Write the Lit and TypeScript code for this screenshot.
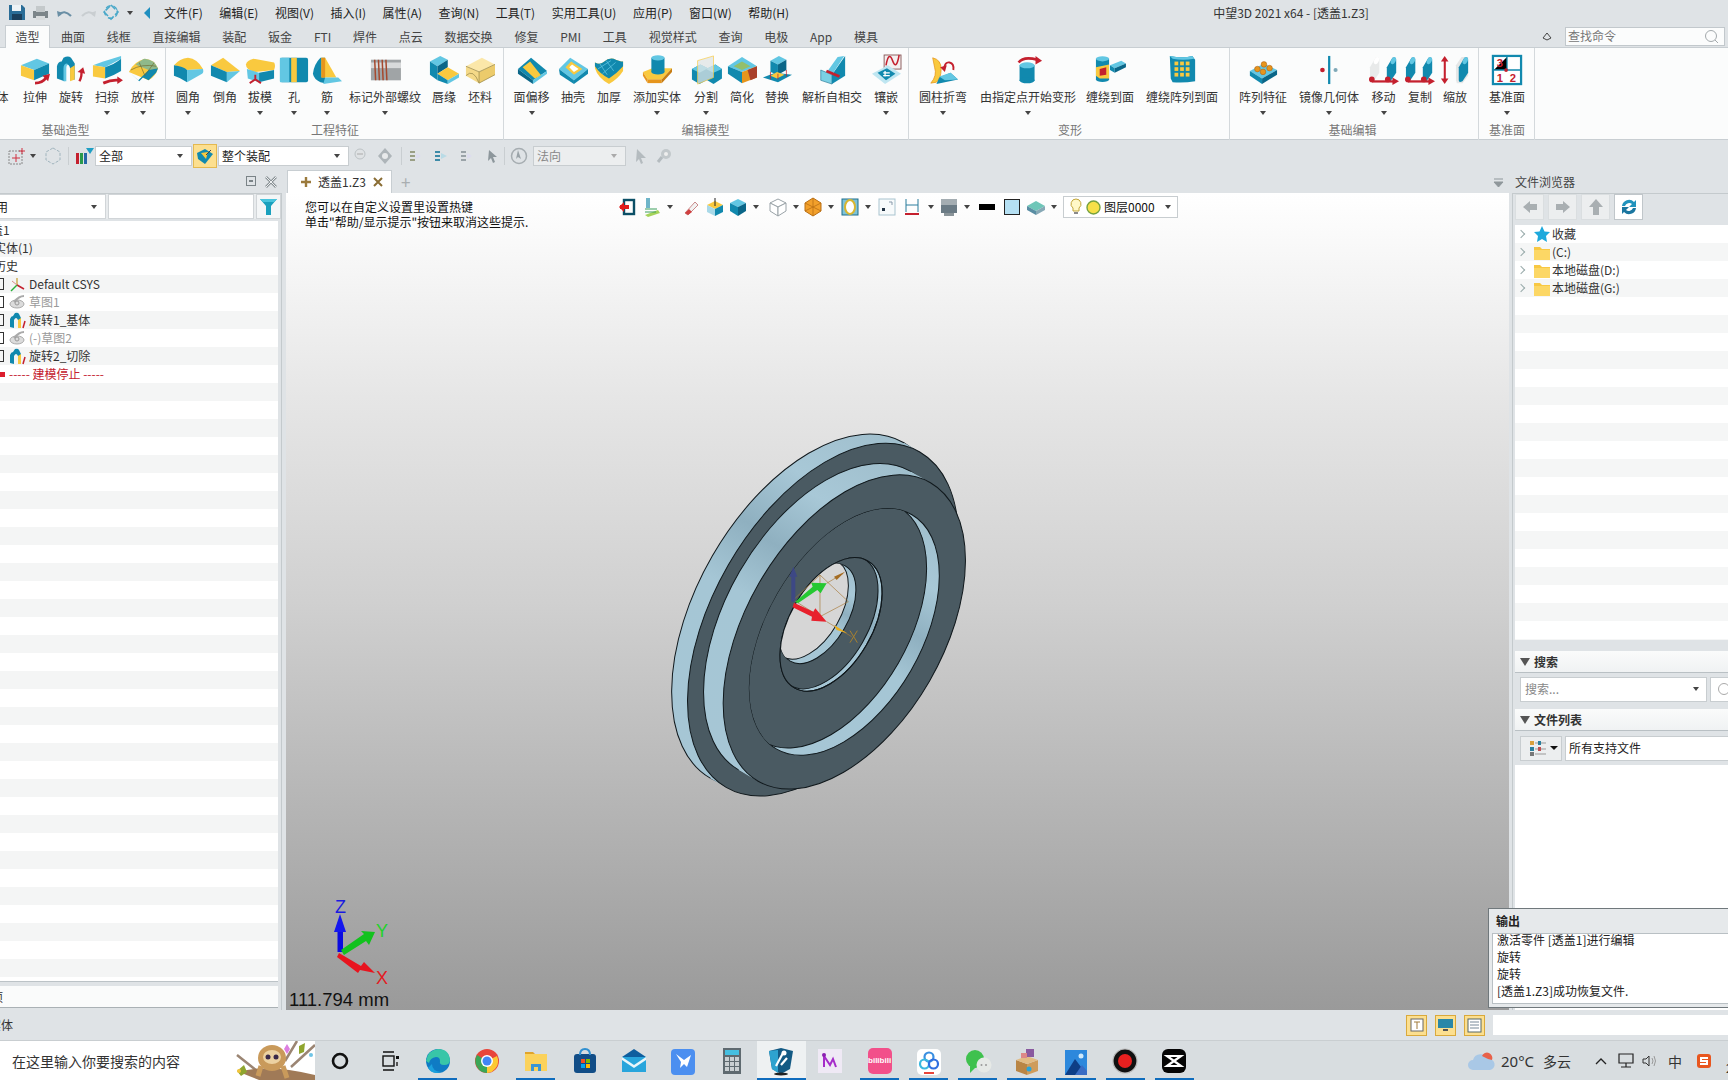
import { LitElement, html, svg, css } from "lit";
import { customElement } from "lit/decorators.js";

const lb = "#62c7e3", tl = "#1189ae", dk = "#0a6688", ye = "#f9c93f", or = "#e6951c", rd = "#c4202e";

const cyl = (x: number, y: number, w: number, h: number, c = tl, top = lb) => svg`<rect x=${x} y=${y} width=${w} height=${h} fill=${c}/><ellipse cx=${x + w / 2} cy=${y + h} rx=${w / 2} ry=${w / 5} fill=${c}/><ellipse cx=${x + w / 2} cy=${y} rx=${w / 2} ry=${w / 5} fill=${top}/>`;
const slant = (x: number, c: string, t: string) => svg`<path d="M${x} 27V13l6-10q4-2 4 2v14l-6 9q-4 2-4-1z" fill=${c}/><ellipse cx=${x + 7} cy="6" rx="2.5" ry="4" transform="rotate(25 ${x + 7} 6)" fill=${t}/>`;

const I: Record<string, unknown> = {
  cut: svg`<polygon points="0,6 19,12 19,30 0,24" fill=${tl}/>`,
  extrude: svg`<polygon points="1,11 18,4 31,9 15,16" fill=${lb}/><polygon points="1,11 15,16 15,27 1,22" fill=${ye}/><polygon points="15,16 31,9 31,20 15,27" fill=${tl}/><path d="M16 30q8 0 12-6" stroke=${rd} stroke-width="3" fill="none"/><polygon points="24,22 32,20 30,28" fill=${rd}/>`,
  revolve: svg`<path d="M1 25V12q1-5 5-5l2-4q5-3 8 0l4 6v17l-5 1V14q-1-4-3-4t-3 4v14z" fill=${tl}/><path d="M8 28V14q0-5 4-5v2q-1 0-1 4v13z" fill=${lb}/><path d="M15 14l5-3v15l-5 2z" fill=${ye}/><path d="M25 28q3-6 2-11" stroke=${rd} stroke-width="2.5" fill="none"/><polygon points="23,18 29,13 31,20" fill=${rd}/>`,
  sweep: svg`<polygon points="1,11 12,7 31,1 31,4 14,13" fill=${lb}/><polygon points="1,11 14,13 14,25 1,23" fill=${ye}/><path d="M14 13q10-3 17-9v13q-8 5-17 8z" fill=${tl}/><path d="M12 30q9-4 17-3" stroke=${rd} stroke-width="3" fill="none"/><polygon points="27,23 33,27 27,31" fill=${rd}/>`,
  loft: svg`<path d="M1 18Q6 7 18 4q10 1 14 10-2 8-10 13z" fill=${ye}/><path d="M8 10q8-6 10-6 10 1 14 10l-10 2z" fill="#8fb98a"/><path d="M1 18l10 9 11-11 10-2-2 5-8 8-6-3-4 4z" fill=${tl}/><path d="M12 8l6 14 10-14M3 16q12-7 27-4" stroke="#6f6a2e" stroke-width=".7" fill="none"/>`,
  fillet: svg`<path d="M1 11q6-7 15-8 10 1 16 12l-17 1q-8-4-14-5z" fill=${ye}/><path d="M1 11q10 1 14 5l0 13Q8 24 1 22z" fill=${tl}/><path d="M15 16l17-1q1 4-1 5L15 29z" fill=${lb}/>`,
  chamfer: svg`<polygon points="1,11 14,3 32,17 18,18" fill=${ye}/><polygon points="1,11 18,18 18,29 1,22" fill=${tl}/><polygon points="18,18 32,17 18,29" fill=${lb}/>`,
  draft: svg`<path d="M1 10q1-4 8-6l22 4q2 3 0 8l-20 2q-10-2-10-8z" fill=${ye}/><path d="M2 15l13 4v10l-12-4z" fill=${lb}/><path d="M15 19l16-3v9l-16 4z" fill=${tl}/><path d="M11 21v5l-6 4M11 26l6 4" stroke=${rd} stroke-width="2" fill="none"/>`,
  hole: svg`<rect x="1" y="3" width="30" height="26" rx="2" fill=${tl}/><rect x="1" y="3" width="10" height="26" fill=${lb}/><rect x="13" y="3" width="6" height="26" fill=${ye}/>`,
  rib: svg`<path d="M1 20Q2 10 9 3l5 0v27l-5-1q-7-3-8-9z" fill=${tl}/><polygon points="10,3 14,3 26,24 10,24" fill=${ye}/><polygon points="10,3 14,3 14,24 10,24" fill=${or}/><polygon points="14,24 28,24 32,28 12,31" fill=${lb}/>`,
  thread: svg`<rect x="1" y="5" width="32" height="22" fill="#a0a4a6"/><rect x="1" y="8" width="32" height="6" fill="#d8dadb"/>
    <path d="M5 5l1 22M9 5l1 22M13 5l1 22M17 5l1 22" stroke="#a5492e" stroke-width="1.6"/>`,
  lip: svg`<polygon points="1,7 12,1 20,5 9,12" fill=${lb}/><polygon points="1,7 9,12 9,27 1,21" fill=${tl}/><polygon points="9,12 20,5 20,13 9,20" fill=${dk}/><polygon points="9,20 20,13 32,20 20,27" fill=${ye}/><polygon points="9,20 20,27 20,31 9,27" fill=${tl}/><polygon points="20,27 32,20 32,24 20,31" fill=${lb}/>`,
  stock: svg`<polygon points="1,12 18,3 32,10 15,18" fill="#fbe7a9"/><polygon points="1,12 15,18 15,30 1,22" fill="#f4d988"/><polygon points="15,18 32,10 32,21 15,30" fill="#eccb6b"/><path d="M1 12l14 6 17-8M15 18v12M1 22q8-8 14 8M15 30l17-9" stroke="#9a8a4c" stroke-width=".8" fill="none"/>`,
  offset: svg`<polygon points="1,15 15,3 32,17 17,27" fill=${tl}/><polygon points="6,13 14,7 26,22 19,25" fill=${ye}/><polygon points="1,15 17,27 17,31 1,20" fill=${dk}/><polygon points="17,27 32,17 32,20 17,31" fill=${lb}/>`,
  shell: svg`<polygon points="1,15 13,3 32,15 17,27" fill=${lb}/><polygon points="8,13 14,7 26,15 17,21" fill=${ye}/><polygon points="12,13 15,10 22,15 17,18" fill="#fff"/><polygon points="1,15 17,27 17,31 2,21" fill=${tl}/><polygon points="17,27 32,15 32,20 17,31" fill=${tl}/>`,
  thicken: svg`<path d="M1 8q6 3 10-1t10-3q6 3 10 3v10q-5 8-15 14Q4 24 1 14z" fill=${ye}/><path d="M1 8q6 3 10-1t10-3q6 3 10 3v5q-6 7-15 13Q6 20 1 12z" fill=${tl}/><path d="M6 9l8 12M13 6l8 11M4 15l14-9M9 20l14-12" stroke=${lb} stroke-width=".8"/>`,
  addsolid: svg`<polygon points="1,18 11,14 32,14 21,26 6,26" fill=${ye}/><polygon points="1,18 6,26 6,30 1,22" fill=${or}/><polygon points="6,26 21,26 21,30 6,30" fill=${or}/><polygon points="21,26 32,14 32,18 21,30" fill="#c77d14"/>${cyl(10, 3, 14, 15)}`,
  split: svg`<polygon points="1,15 10,10 18,14 18,26 9,31 1,26" fill=${tl}/><polygon points="16,15 26,10 33,15 33,25 24,31 16,26" fill=${tl}/><polygon points="16,15 26,10 33,15 24,19" fill=${lb}/><polygon points="1,15 10,10 18,14 9,19" fill=${lb}/><polygon points="7,6 24,1 24,24 7,31" fill="#dfe4e4" fill-opacity=".75" stroke=${ye} stroke-width=".7"/>`,
  simplify: svg`<polygon points="1,12 16,2 32,12 16,18" fill=${lb}/><polygon points="1,12 16,18 16,30 1,20" fill=${tl}/><polygon points="16,18 32,12 32,24 16,30" fill=${or}/><polygon points="7,12 16,7 25,12 16,16" fill="#93bf6a"/><polygon points="22,16 32,12 32,24 25,27" fill="#a9402a"/>`,
  replace: svg`<polygon points="9,6 18,1 26,5 17,10" fill=${lb}/><polygon points="9,6 17,10 17,21 9,18" fill=${tl}/><polygon points="17,10 26,5 26,16 17,21" fill=${dk}/><polygon points="1,24 14,19 32,21 17,29" fill=${tl}/><polygon points="9,22 16,18 24,21 16,25" fill=${ye}/><path d="M9 18v8M17 20v6M26 16v7" stroke=${rd} stroke-width=".8"/>`,
  selfint: svg`<polygon points="4,16 16,21 16,31 4,27" fill="#7bd0e4" stroke=${dk} stroke-width=".6"/><polygon points="16,21 30,1 30,22 16,31" fill=${tl}/><polygon points="10,19 22,2 29,1 16,21" fill=${lb}/><path d="M10 17l14 6" stroke=${rd} stroke-width="3"/>`,
  inlay: svg`<rect x="14" y="0" width="18" height="15" fill="#f3f0f0" stroke="#8a5a5a"/><path d="M16 11q3-16 7-5t7-6" stroke=${rd} fill="none" stroke-width="1.6"/><polygon points="1,20 18,11 32,20 15,31" fill="#bfe6f1"/><polygon points="7,19 17,14 26,20 16,27" fill=${tl}/><path d="M13 19h7M13 22h7M15 17v6" stroke="#fff" stroke-width="1.4"/>`,
  bend: svg`<path d="M5 3q9 2 9 12t-5 14l-6 1q7-8 4-17z" fill=${ye} stroke=${or} stroke-width=".8"/><polygon points="12,24 24,19 32,26 9,31" fill=${tl}/><polygon points="12,23 24,19 32,26 18,27" fill=${lb}/><path d="M17 15q1-8 6-7t4 8" stroke=${rd} stroke-width="2" fill="none"/><polygon points="13,13 20,11 18,18" fill=${rd}/>`,
  deform: svg`${cyl(7, 11, 16, 16)}<path d="M6 8q5-7 20-3" stroke=${rd} stroke-width="2.8" fill="none"/><polygon points="24,1 31,6 24,10" fill=${rd}/>`,
  wrap: svg`${cyl(1, 4, 14, 22)}<polygon points="1,13 15,10 15,25 5,25 1,22" fill=${ye}/><polygon points="5,15 12,13 12,21 5,22" fill=${rd}/><polygon points="16,11 28,6 33,9 21,14" fill=${lb}/><polygon points="16,11 21,14 21,19 16,16" fill=${tl}/><polygon points="21,14 33,9 33,13 21,19" fill=${dk}/>`,
  wrappat: svg`<path d="M3 1q14 3 24 0l3 4v23q-12 2-24 1l-2-4z" fill=${tl}/><path d="M3 1q14 3 24 0l2 3q-12 2-23 0z" fill=${lb}/><g fill=${ye}><rect x="8" y="7" width="4" height="4"/><rect x="14" y="7" width="4" height="4"/><rect x="20" y="7" width="4" height="4"/><rect x="8" y="13" width="4" height="4"/><rect x="14" y="13" width="4" height="4"/><rect x="20" y="13" width="4" height="4"/><rect x="8" y="19" width="4" height="4"/><rect x="14" y="19" width="4" height="4"/><rect x="20" y="19" width="4" height="4"/></g>`,
  pattern: svg`<polygon points="2,17 17,9 31,16 15,25" fill=${lb}/><polygon points="2,17 15,25 15,31 2,22" fill=${tl}/><polygon points="15,25 31,16 31,21 15,31" fill=${dk}/><g fill=${or} stroke="#a8560f" stroke-width=".5"><circle cx="10" cy="15" r="3"/><circle cx="17" cy="10" r="3"/><circle cx="23" cy="14" r="3"/><circle cx="16" cy="18" r="3"/></g>`,
  mirror: svg`<rect x="15" y="1" width="2.4" height="30" fill=${tl}/><circle cx="9" cy="16" r="2.5" fill=${rd}/><circle cx="23" cy="16" r="2.2" fill="#7fa9b8"/>`,
  move: svg`${slant(1, "#e8eaea", "#fff")}${slant(19, tl, lb)}<circle cx="3" cy="26" r="3" fill=${rd}/><circle cx="20" cy="26" r="3" fill=${rd}/><rect x="3" y="27" width="23" height="2.4" fill=${rd}/><polygon points="25,24 32,28 25,32" fill=${rd}/>`,
  copy: svg`${slant(1, tl, lb)}${slant(19, tl, lb)}<circle cx="3" cy="26" r="3" fill=${rd}/><circle cx="20" cy="26" r="3" fill=${rd}/><rect x="3" y="27" width="23" height="2.4" fill=${rd}/><polygon points="25,24 32,28 25,32" fill=${rd}/>`,
  scale: svg`<rect x="4" y="5" width="2.2" height="22" fill=${rd}/><polygon points="1,7 5,1 9,7" fill=${rd}/><polygon points="1,25 5,31 9,25" fill=${rd}/><path d="M17 27V11l6-9h7v20l-6 8h-6z" fill="#e5e7e7"/>${slant(20, tl, lb)}`,
  datum: svg`<rect x="1" y="1" width="30" height="30" fill="#fff" stroke=${tl} stroke-width="2.4"/><path d="M16 2v14H2M16 16h14" stroke=${tl} stroke-width="1.4"/><circle cx="15" cy="16" r="2" fill=${rd}/><g fill=${rd} font-family="Liberation Sans" font-weight="700" font-size="12"><text x="5" y="13">3</text><text x="5" y="29">1</text><text x="19" y="29">2</text></g>`,
  save: svg`<path d="M1 1h13l3 3v12H1z" fill="#2a6d97"/><rect x="4" y="1" width="9" height="6" fill="#eef3f6"/><rect x="4" y="10" width="10" height="6" fill="#1a3f5c"/>`,
  print: svg`<rect x="1" y="7" width="15" height="7" fill="#7c8589"/><rect x="4" y="2" width="9" height="6" fill="#c4c9cb"/><rect x="4" y="12" width="9" height="4" fill="#d9dcdd"/>`,
  undo: svg`<path d="M3 9q5-6 12 1" stroke="#6a8fa5" stroke-width="2.2" fill="none"/><polygon points="1,5 7,7 2,11" fill="#6a8fa5"/>`,
  redo: svg`<path d="M14 9q-5-6-12 1" stroke="#c9ced1" stroke-width="2.2" fill="none"/><polygon points="16,5 10,7 15,11" fill="#c9ced1"/>`,
  orbit: svg`<path d="M9 1l7 7-7 7-7-7z" fill="none" stroke="#49a8c9" stroke-width="1.6" stroke-dasharray="6 2"/><circle cx="9" cy="8" r="6.4" fill="none" stroke="#49a8c9" stroke-width="1.2" stroke-dasharray="5 3"/>`,
};

const fileIcon = svg`<path d="M0 3h6l2 2h8v11H0z" fill="#f8c843"/><rect y="6" width="16" height="10" fill="#fcd765"/>`;

const tri = svg`
  <g fill="none" stroke="#a77a3a" stroke-width="2"><path d="M510 465l85 80-85 45-80-50zM510 465v125"/><path d="M530 490l50-30M530 605l75 45"/></g>
  <polygon points="418,470 430,440 442,470 436,470 436,545 424,545 424,470" fill="#39448f" fill-opacity=".8"/>
  <polygon points="436,545 488,500 484,488 530,490 512,520 502,510 444,550" fill="#25c832"/>
  <polygon points="432,548 490,575 496,565 530,605 484,602 486,590 428,562" fill="#e8202c"/>
  <polygon points="552,470 585,455 560,480" fill="#a46c22"/><polygon points="552,615 592,640 560,630" fill="#eeb11d"/>
  <path d="M600 632l22 36M622 632l-22 36" stroke="#a8812e" stroke-width="3"/>`;

const part = svg`
  <defs>
    <linearGradient id="lg" x1="0" x2="1" y1="0" y2="0"><stop offset="0" stop-color="#a6c6d5"/><stop offset=".45" stop-color="#a5c6d5"/><stop offset=".62" stop-color="#8fb0c0"/><stop offset=".8" stop-color="#a8c8d7"/><stop offset="1" stop-color="#a0bfcd"/></linearGradient>
    <clipPath id="ce"><ellipse rx="406" ry="231"/></clipPath>
    <clipPath id="ch"><ellipse cy="-46" rx="220" ry="123"/></clipPath>
    <clipPath id="ck"><ellipse cx="8" cy="-97" rx="165" ry="92"/></clipPath>
  </defs>
  <g transform="translate(650 420) scale(.3333)">
    <g transform="translate(583 636) rotate(-60)" stroke="#10181c" stroke-width="3">
      <ellipse cy="-129" rx="581" ry="328" fill="url(#lg)"/>
      <rect x="-581" y="-129" width="1162" height="55" fill="url(#lg)" stroke="none"/>
      <ellipse cy="-120" rx="581" ry="328" fill="none" stroke-width="1.5" stroke-dasharray="500 3000" stroke-dashoffset="-100"/>
      <ellipse cy="-74" rx="581" ry="328" fill="#4a5a62"/>
      <ellipse cy="-68" rx="517" ry="295" fill="url(#lg)"/>
      <rect x="-517" y="-68" width="1034" height="68" fill="url(#lg)" stroke="none"/>
      <ellipse rx="517" ry="295" fill="#4a5a62"/>
      <ellipse rx="406" ry="231" fill="url(#lg)"/>
      <g clip-path="url(#ce)"><ellipse cy="-44" rx="406" ry="231" fill="#4a5a62"/></g>
      <ellipse cy="-46" rx="220" ry="123" fill="url(#lg)"/>
      <g clip-path="url(#ch)">
        <ellipse cy="-60" rx="220" ry="123" fill="#4a5a62"/>
        <ellipse cx="8" cy="-97" rx="165" ry="92" fill="url(#lg)"/>
        <g clip-path="url(#ck)"><ellipse cx="8" cy="-123" rx="165" ry="92" fill="#d6d6d6"/></g>
      </g>
      <ellipse cy="-46" rx="220" ry="123" fill="none"/>
    </g>
    ${tri}
  </g>
  <g>
    <rect x="337.500" y="930" width="5.500" height="22" fill="#0a0ae0"/><polygon points="334,932 340,914 346,932" fill="#1416ee"/>
    <polygon points="341,950 364,934 361,931 375,932 369,945 366,941 344,955" fill="#12c21e"/>
    <polygon points="339,953 361,966 364,962 375,973 360,970 358,973 337,957" fill="#e8141e"/>
    <text x="335" y="913" fill="#1a1ae0" font-family="Liberation Sans" font-size="18">Z</text>
    <text x="376" y="937" fill="#22d22a" font-family="Liberation Sans" font-size="18">Y</text>
    <text x="376" y="984" fill="#e31b23" font-family="Liberation Sans" font-size="18">X</text>
  </g>`;

type It = [string, number, string, boolean?];
const groups: { label: string; pl?: number; pr?: number; items: It[] }[] = [
  { label: "基础造型", pl: 41, pr: 4, items: [["六面体", 41, "cut"], ["", 6, ""], ["拉伸", 36, "extrude"], ["旋转", 36, "revolve"], ["扫掠", 36, "sweep", true], ["放样", 36, "loft", true]] },
  { label: "工程特征", items: [["圆角", 36, "fillet", true], ["倒角", 38, "chamfer"], ["拔模", 32, "draft", true], ["孔", 36, "hole", true], ["筋", 30, "rib", true], ["标记外部螺纹", 86, "thread", true], ["唇缘", 32, "lip"], ["坯料", 40, "stock"]] },
  { label: "编辑模型", pr: 5, items: [["面偏移", 47, "offset", true], ["抽壳", 36, "shell"], ["加厚", 36, "thicken"], ["添加实体", 60, "addsolid", true], ["分割", 38, "split", true], ["简化", 34, "simplify"], ["替换", 36, "replace"], ["解析自相交", 74, "selfint"], ["镶嵌", 34, "inlay", true]] },
  { label: "变形", pr: 2, items: [["圆柱折弯", 60, "bend", true], ["由指定点开始变形", 110, "deform", true], ["缠绕到面", 54, "wrap"], ["缠绕阵列到面", 90, "wrappat"]] },
  { label: "基础编辑", pr: 7, items: [["阵列特征", 58, "pattern", true], ["镜像几何体", 74, "mirror", true], ["移动", 35, "move", true], ["复制", 38, "copy"], ["缩放", 32, "scale"]] },
  { label: "基准面", items: [["基准面", 48, "datum", true]] },
];

const menus = ["文件(F)", "编辑(E)", "视图(V)", "插入(I)", "属性(A)", "查询(N)", "工具(T)", "实用工具(U)", "应用(P)", "窗口(W)", "帮助(H)"];
const tabs = ["造型", "曲面", "线框", "直接编辑", "装配", "钣金", "FTI", "焊件", "点云", "数据交换", "修复", "PMI", "工具", "视觉样式", "查询", "电极", "App", "模具"];

const caret = html`<span class="caret"></span>`;
const csysIc = svg`<path d="M8 9V2" stroke="#c9a23a" stroke-width="1.3"/><path d="M8 9l7 4" stroke="#c4202e" stroke-width="1.5"/><path d="M8 9l-6 6" stroke="#2ab03a" stroke-width="1.5"/><path d="M8 9L3 5" stroke="#d98a8a"/>`;
const sketchIc = svg`<ellipse cx="8" cy="10" rx="7" ry="4" fill="#dcdcdc" stroke="#aaa"/><path d="M5 8q5-6 10-6" stroke="#aaa" stroke-width="2" fill="none"/><circle cx="8" cy="9" r="2" fill="none" stroke="#999"/>`;
const revIc = svg`<path d="M1 15V7q1-3 3-3l2-3q3-1 4 1l2 4v10l-3 0V8q-1-2-2-2T5 8v8z" fill="#1189ae"/><path d="M9 8l3-2v10l-3 0z" fill="#f9c93f"/><path d="M14 16l2-7" stroke="#c4202e" stroke-width="1.5"/>`;

const treeRows: [unknown, string, string?][] = [
  [csysIc, "Default CSYS"],
  [sketchIc, "草图1", "g"],
  [revIc, "旋转1_基体"],
  [sketchIc, "(-)草图2", "g"],
  [revIc, "旋转2_切除"],
];

const viewIcons: [unknown, number, boolean?][] = [
  [svg`<rect x="5" y="3" width="10" height="14" fill="none" stroke="#0b4f66" stroke-width="2.4"/><rect x="1" y="8" width="9" height="4" fill="#e01b1b"/><polygon points="0,10 5,5 5,15" fill="#e01b1b"/>`, 23],
  [svg`<rect x="4" y="1" width="4" height="10" fill="#6fb5c9"/><path d="M3 18l13-5 2 3-12 4z" fill="#a5d35a"/><path d="M3 12h12M3 15h11" stroke="#3c9f5c"/>`, 40, true],
  [svg`<path d="M3 16l10-11 3 3L6 18z" fill="#f2f2f2" stroke="#c98a8a"/><path d="M3 16l4-4 3 3-4 3z" fill="#d04040"/>`, 23],
  [svg`<polygon points="2,8 10,4 18,8 10,12" fill="#f9c93f"/><polygon points="2,8 10,12 10,19 2,15" fill="#a9d9e8"/><polygon points="10,12 18,8 18,15 10,19" fill="#1189ae"/><path d="M10 1v8" stroke="#222"/>`, 23],
  [svg`<polygon points="2,6 10,2 18,6 10,10" fill="#62c7e3"/><polygon points="2,6 10,10 10,19 2,14" fill="#1189ae"/><polygon points="10,10 18,6 18,14 10,19" fill="#0a6688"/>`, 40, true],
  [svg`<g fill="#fff" stroke="#9aa3a8"><polygon points="2,6 10,2 18,6 10,10"/><polygon points="2,6 10,10 10,19 2,14"/><polygon points="10,10 18,6 18,14 10,19"/></g>`, 35, true],
  [svg`<polygon points="10,1 18,6 18,14 10,19 2,14 2,6" fill="#f2a02b" stroke="#b96e14"/><path d="M10 1v18M2 6l16 8M18 6L2 14" stroke="#b96e14" stroke-width=".8"/>`, 37, true],
  [svg`<rect x="2" y="2" width="16" height="16" fill="#7fc3d8" stroke="#1f6f8b"/><ellipse cx="10" cy="10" rx="5" ry="7" fill="#fff" stroke="#d9b62f" stroke-width="2"/>`, 37, true],
  [svg`<rect x="2" y="2" width="16" height="16" fill="#f7fafb" stroke="#a9c4cf"/><rect x="5" y="11" width="3" height="3" fill="#234"/><path d="M12 5h3v3" stroke="#89a" fill="none"/>`, 26],
  [svg`<path d="M3 2v13M15 2v13" stroke="#6fa6bc" stroke-width="1.5"/><path d="M3 8h12" stroke="#2c7f9e"/><path d="M2 17h14" stroke="#c4202e" stroke-width="2"/>`, 36, true],
  [svg`<rect x="2" y="2" width="16" height="14" fill="#6b7b85"/><rect x="2" y="2" width="16" height="6" fill="#a4adb2"/><rect x="5" y="16" width="10" height="3" fill="#8a9499"/>`, 40, true],
];

const taskIcons: [string, unknown][] = [
  ["", svg`<circle cx="14" cy="14" r="7" fill="none" stroke="#111" stroke-width="2.6"/>`],
  ["", svg`<rect x="8" y="9" width="11" height="10" fill="none" stroke="#111" stroke-width="1.4"/><path d="M8 5h11M8 23h11" stroke="#111" stroke-width="1.6"/><rect x="21" y="9" width="3" height="3" fill="#111"/><rect x="21" y="15" width="2" height="4" fill="#555"/>`],
  ["u", svg`<circle cx="14" cy="14" r="12" fill="#0f7bc4"/><path d="M2 14Q4 3 14 2q11 0 12 11 0 5-6 5-5 0-4-4 0-4-4-4-6 1-7 6z" fill="#38c6a8"/><path d="M8 17q0 7 9 8-9 3-13-4z" fill="#1ba0dd"/>`],
  ["", svg`<circle cx="14" cy="14" r="12" fill="#e8453a"/><path d="M14 14L4 20A12 12 0 0 0 14 26z" fill="#3aa757"/><path d="M14 14l10-5a12 12 0 0 1-10 17z" fill="#fcc934"/><path d="M14 14L4 20A12 12 0 0 1 4 8z" fill="#3aa757"/><circle cx="14" cy="14" r="6" fill="#fff"/><circle cx="14" cy="14" r="4.500" fill="#4285f4"/>`],
  ["u", svg`<path d="M3 5h8l2 2H3z" fill="#e0a42b"/><rect x="3" y="7" width="22" height="17" fill="#fbd25c"/><path d="M9 24v-7h10v7h-3v-4h-4v4z" fill="#3a96d6"/>`],
  ["", svg`<rect x="3" y="7" width="22" height="19" rx="3" fill="#114d87"/><path d="M9 8q0-6 5-6t5 6" stroke="#2f8fd0" stroke-width="2" fill="none"/><rect x="10" y="12" width="4" height="4" fill="#f25022"/><rect x="15" y="12" width="4" height="4" fill="#7fba00"/><rect x="10" y="17" width="4" height="4" fill="#00a4ef"/><rect x="15" y="17" width="4" height="4" fill="#ffb900"/>`],
  ["", svg`<polygon points="2,10 14,2 26,10 14,18" fill="#0e5e9e"/><rect x="2" y="10" width="24" height="15" fill="#28a5dc"/><polygon points="2,10 14,18 26,10 26,13 14,21 2,13" fill="#e9f6fb"/>`],
  ["", svg`<rect x="2" y="2" width="24" height="26" rx="4" fill="#4c8ff0"/><path d="M7 7l8 6 7-5-4 12-3-3-4 4 1-6z" fill="#fff"/>`],
  ["", svg`<rect x="5" y="1" width="18" height="26" fill="#5f6a70"/><rect x="7" y="3" width="14" height="5" fill="#45bfe0"/><g fill="#c9cfd2"><rect x="7" y="10" width="4" height="4"/><rect x="12" y="10" width="4" height="4"/><rect x="17" y="10" width="4" height="4"/><rect x="7" y="15" width="4" height="4"/><rect x="12" y="15" width="4" height="4"/><rect x="17" y="15" width="4" height="4"/><rect x="7" y="20" width="4" height="4"/><rect x="12" y="20" width="4" height="4"/><rect x="17" y="20" width="4" height="4"/></g>`],
  ["a", svg`<polygon points="2,4 14,1 26,4 23,22 14,27 5,22" fill="#135a84"/><polygon points="2,4 11,3 11,26 5,22" fill="#2ea3cf"/><path d="M9 19l7-13M14 18l6-7" stroke="#fff" stroke-width="2.2"/><circle cx="17" cy="6" r="2.500" fill="#fff"/><ellipse cx="14" cy="27" rx="7" ry="1.500" fill="#222"/>`],
  ["", svg`<rect x="2" y="2" width="24" height="24" fill="#efe9f5"/><path d="M8 20V9M8 9l6 9 3-6 3 8" stroke="#a52bc9" stroke-width="2" fill="none"/><circle cx="8" cy="8" r="2" fill="#8a1eb0"/>`],
  ["u", ""],
  ["u", svg`<rect x="2" y="2" width="24" height="26" rx="5" fill="#fff"/><circle cx="14" cy="10" r="4.500" fill="none" stroke="#3a8fe0" stroke-width="2.2"/><circle cx="9.500" cy="17" r="4.500" fill="none" stroke="#3ab8e0" stroke-width="2.2"/><circle cx="18.500" cy="17" r="4.500" fill="none" stroke="#2f6fe0" stroke-width="2.2"/><rect x="9" y="25" width="10" height="2" fill="#e8453a"/>`],
  ["u", svg`<ellipse cx="11" cy="12" rx="9" ry="9" fill="#3fc14e"/><polygon points="6,19 6,26 12,20" fill="#3fc14e"/><circle cx="20" cy="18" r="7.500" fill="#e6e9e6"/><circle cx="17.500" cy="18" r="1" fill="#999"/><circle cx="22" cy="18" r="1" fill="#999"/>`],
  ["u", svg`<polygon points="3,13 14,17 14,28 3,24" fill="#b98545"/><polygon points="14,17 25,13 25,24 14,28" fill="#cf9c5c"/><polygon points="3,13 14,9 25,13 14,17" fill="#e2bb84"/><rect x="13" y="2" width="8" height="8" fill="#8a5aa0"/><rect x="8" y="6" width="6" height="5" fill="#d88"/><circle cx="16" cy="22" r="2.500" fill="#28a5dc"/>`],
  ["u", svg`<rect x="3" y="3" width="22" height="25" fill="#2d88dc"/><circle cx="19" cy="9" r="2.500" fill="#cfe9fb"/><polygon points="3,28 13,12 25,28" fill="#0e3e86"/><polygon points="13,28 20,18 25,24 25,28" fill="#3a6cc4"/>`],
  ["u", svg`<circle cx="14" cy="14" r="12" fill="#111" stroke="#bbb" stroke-width="1.2"/><circle cx="14" cy="14" r="7" fill="#e8201f"/>`],
  ["u", svg`<rect x="2" y="2" width="24" height="24" rx="6" fill="#050505"/><path d="M7 9l14 10H7l14-10zM7 9h14M7 19h14" stroke="#fff" stroke-width="2.2" fill="none"/>`],
];

@customElement("app-root")
export class AppRoot extends LitElement {
  static styles = css`
    :host { display: block; width: 1728px; height: 1080px; overflow: hidden; position: relative; background: #dfe3e6; font-family: "Noto Sans CJK SC", "Noto Sans", sans-serif; font-size: 12px; color: #333; line-height: 1; }
    svg { display: block; flex: none; overflow: visible; }
    .menubar { height: 25px; display: flex; align-items: center; white-space: nowrap; padding-left: 8px; position: relative; }
    .qa { display: flex; align-items: center; gap: 7px; width: 156px; flex: none; }
    .qa .back { width: 0; height: 0; border-top: 6px solid transparent; border-bottom: 6px solid transparent; border-right: 6px solid #1f8fc0; margin-left: 4px; }
    .qa .orb { margin-left: -2px; }
    .menus { display: flex; gap: 16.500px; color: #222; }
    .title { margin-left: 424px; color: #333; }
    .tabs { height: 22px; display: flex; padding-left: 5px; position: relative; z-index: 1; }
    .tab { padding: 0 10.900px; display: flex; align-items: center; color: #444; margin-bottom: -1px; }
    .tab.on { background: #fbfcfc; border: 1px solid #c8ced2; border-bottom: none; padding: 0 9.500px; }
    .cmd { margin-left: auto; margin-right: 3px; display: flex; align-items: center; gap: 13px; }
    .cmdbox { width: 160px; height: 19px; background: #fbfcfc; border: 1px solid #c2c8cc; display: flex; align-items: center; justify-content: space-between; padding: 0 5px 0 2px; color: #777; box-sizing: border-box; }
    .ribbon { height: 93px; background: #fbfcfc; border-top: 1px solid #c8ced2; border-bottom: 1px solid #c8ced2; box-sizing: border-box; display: flex; margin-left: -71px; width: 1799px; }
    .grp { display: flex; flex-direction: column; border-right: 1px solid #d4d9dc; padding: 0 3px 0 4px; box-sizing: border-box; flex: none; height: 92px; }
    .grp .items { display: flex; height: 73px; }
    .grp .lab { flex: 1; display: flex; align-items: center; justify-content: center; color: #777; padding-bottom: 2px; }
    .item { display: flex; flex-direction: column; align-items: center; padding-top: 7px; box-sizing: border-box; flex: none; white-space: nowrap; color: #333; }
    .item .t { margin-top: 6px; height: 14px; }
    .caret { width: 0; height: 0; border-left: 3px solid transparent; border-right: 3px solid transparent; border-top: 4px solid #444; flex: none; display: inline-block; }
    .item .caret { margin-top: 6px; }
    .tools { height: 30px; display: flex; align-items: center; padding: 2px 0 0 8px; box-sizing: border-box; }
    .combo { height: 20px; background: #fff; border: 1px solid #c8cdd0; box-sizing: border-box; display: flex; align-items: center; justify-content: space-between; padding: 0 8px 0 3px; color: #222; flex: none; }
    .combo.dis { background: #eceeef; color: #888; }
    .combo.dis .caret { border-top-color: #aaa; }
    .yellowbtn { width: 24px; height: 24px; background: #fcdf8f; border: 1px solid #e4b94f; box-sizing: border-box; display: flex; align-items: center; justify-content: center; margin: 0 1px; flex: none; }
    .vs { width: 1px; height: 18px; background: #c9ced1; flex: none; }
    .docbar { height: 23px; display: flex; align-items: stretch; }
    .docl { width: 287px; flex: none; display: flex; justify-content: flex-end; align-items: center; gap: 8px; padding-right: 10px; box-sizing: border-box; }
    .doctab { width: 105px; background: #fff; border: 1px solid #c8ced2; border-bottom: none; box-sizing: border-box; display: flex; align-items: center; padding-left: 13px; gap: 4px; color: #333; }
    .doctab span { white-space: nowrap; margin-left: 3px; }
    .doctab .x { margin-left: 3px; }
    .plus { color: #a9aeb1; font-size: 17px; margin-left: 9px; align-self: center; }
    .fbt { margin-left: auto; width: 216px; display: flex; align-items: center; gap: 12px; box-sizing: border-box; color: #444; position: relative; left: -1px; }
    .fbt svg { margin-left: -18px; }
    .main { height: 817px; display: flex; }
    .left { width: 282px; flex: none; display: flex; flex-direction: column; border-right: 1px solid #c4cacd; border-top: 1px solid #c4cacd; box-sizing: border-box; }
    .frow { height: 25px; display: flex; gap: 2px; flex: none; background: #e8ebed; }
    .fsel { width: 106px; background: #fff; border: 1px solid #d1d5d8; border-left: none; box-sizing: border-box; display: flex; align-items: center; justify-content: space-between; padding-right: 8px; color: #222; }
    .fsel span { margin-left: -16px; }
    .fin { width: 146px; background: #fff; border: 1px solid #d1d5d8; box-sizing: border-box; }
    .fbtn { width: 25px; display: flex; align-items: center; justify-content: center; background: #f4f6f7; border: 1px solid #d1d5d8; box-sizing: border-box; }
    .tree { flex: 1; margin: 2px 3px 0 0; background: repeating-linear-gradient(#fff 0 18px, #f4f5f5 18px 36px); overflow: hidden; border-bottom: 1px solid #bcc3c7; }
    .row { height: 18px; display: flex; align-items: center; white-space: nowrap; color: #333; }
    .chk { width: 3px; height: 10px; border: 1px solid #333; border-left: none; flex: none; margin-right: 5px; }
    .row .t { margin-left: 3px; }
    .row.g { color: #9a9a9a; }
    .row.stop { color: #c4202e; }
    .stop i { width: 5px; height: 5px; background: #dc1d2d; margin-right: 4px; flex: none; }
    .lbot { height: 22px; margin: 4px 3px 2px 0; background: #fafbfb; display: flex; align-items: center; flex: none; border-bottom: 1px solid #aab1b5; box-sizing: border-box; color: #333; }
    .lbot span { margin-left: -9px; }
    .vp { width: 1223px; margin-left: 4px; flex: none; position: relative; overflow: hidden; background: linear-gradient(#fff 0%, #e6e6e6 25%, #d0d0d0 50%, #9a9a9a 100%); }
    .vp svg.canvas { position: absolute; inset: 0; }
    .hint { position: absolute; left: 19px; top: 6px; color: #111; line-height: 15px; white-space: nowrap; }
    .vbar { position: absolute; left: 333px; top: 3px; display: flex; align-items: center; height: 22px; }
    .vic { display: flex; align-items: center; flex: none; }
    .vic .caret { margin-left: 5px; }
    .layer { height: 22px; width: 115px; background: #fff; border: 1px solid #c8cdd0; box-sizing: border-box; display: flex; align-items: center; padding: 0 6px 0 5px; gap: 3px; color: #111; }
    .layer span.n { flex: 1; white-space: nowrap; }
    .scale { position: absolute; left: 3px; bottom: 0; font: 18.500px "Liberation Sans", sans-serif; color: #111; line-height: 21px; }
    .right { margin-left: 3px; flex: 1; display: flex; flex-direction: column; border-left: 1px solid #c4cacd; border-top: 1px solid #c4cacd; padding-left: 2px; box-sizing: border-box; min-width: 0; }
    .rtools { height: 31px; display: flex; gap: 4px; flex: none; }
    .rbtn { width: 29px; height: 26px; background: #eceeef; border: 1px solid #dadee0; box-sizing: border-box; display: flex; align-items: center; justify-content: center; }
    .rbtn.on { background: #fff; border-color: #c0c6ca; }
    .ftree { height: 415px; flex: none; background: repeating-linear-gradient(#fff 0 18px, #f5f6f6 18px 36px); }
    .frow2 { height: 18px; display: flex; align-items: center; color: #333; white-space: nowrap; }
    .chev { width: 5px; height: 5px; border-top: 1.500px solid #9aa; border-right: 1.500px solid #9aa; transform: rotate(45deg); margin: 0 10px 0 3px; flex: none; }
    .frow2 svg { margin-right: 2px; }
    .head { height: 22px; flex: none; margin-top: 11px; background: linear-gradient(#fafbfb, #f0f2f3); display: flex; align-items: center; padding-left: 5px; gap: 4px; font-weight: 700; color: #333; border-bottom: 1px solid #b9c0c4; box-sizing: border-box; }
    .head.b { margin-top: 4px; }
    .dn { width: 0; height: 0; border-left: 5px solid transparent; border-right: 5px solid transparent; border-top: 8px solid #555; }
    .srow { height: 32px; flex: none; display: flex; align-items: center; padding-left: 5px; gap: 3px; box-sizing: border-box; white-space: nowrap; }
    .srow .combo { height: 25px; background: #fff; padding: 0 7px 0 4px; }
    .list { flex: 1; background: #fff; }
    .output { position: absolute; left: 1488px; top: 908px; width: 260px; height: 100px; background: #e6e9eb; border: 1px solid #70787c; box-sizing: border-box; display: flex; flex-direction: column; padding: 0 0 3px 3px; }
    .output b { height: 24px; display: flex; align-items: center; padding-left: 4px; color: #222; flex: none; }
    .obody { flex: 1; background: #fff; border: 1px solid #b9c0c4; overflow: hidden; padding-left: 4px; line-height: 17px; color: #222; white-space: nowrap; }
    .obody div { position: relative; top: -3px; }
    .status { height: 30px; display: flex; align-items: center; color: #333; }
    .status .st { margin-left: -11px; width: 1417px; flex: none; }
    .stbtn { width: 21px; height: 21px; background: #fcdf8f; border: 1px solid #d9a93c; box-sizing: border-box; flex: none; margin-right: 8px; display: flex; align-items: center; justify-content: center; }
    .stin { width: 235px; height: 20px; background: #fff; flex: none; }
    .taskbar { height: 40px; display: flex; background: #d8dde0; border-top: 1px solid #c9ced1; box-sizing: border-box; }
    .search { width: 315px; flex: none; background: #fff; display: flex; align-items: center; justify-content: space-between; font-size: 14px; padding-left: 12px; box-sizing: border-box; color: #333; overflow: hidden; }
    .tk { width: 49.100px; flex: none; display: flex; align-items: center; justify-content: center; position: relative; box-sizing: border-box; }
    .tk.a { background: #eef1f2; }
    .tk.u::after, .tk.a::after { content: ""; position: absolute; left: 5px; right: 5px; bottom: 0; height: 2.500px; background: #0f6cbd; }
    .tk.a::after { left: 0; right: 0; }
    .bili { width: 24px; height: 26px; border-radius: 5px; background: #f2508a; color: #fff; font: 700 8px "Liberation Sans", sans-serif; display: flex; align-items: center; justify-content: center; }
    .tray { margin-left: auto; display: flex; align-items: center; white-space: nowrap; color: #333; width: 260px; flex: none; overflow: hidden; }
    .tray .tmp { font: 15px "Noto Sans", sans-serif; margin-left: 7px; }
    .tray .wd { font-size: 14px; margin-left: 9px; }
    .tray .ime { font-size: 14px; margin-left: 10px; }
    .tray .clk { margin-left: 14px; align-self: flex-end; padding-bottom: 6px; }
  `;

  qa() {
    return html`<div class="qa">
      <svg width="17" height="17">${I.save}</svg><svg width="17" height="17">${I.print}</svg>
      <svg width="17" height="14">${I.undo}</svg><svg width="17" height="14">${I.redo}</svg>
      <svg class="orb" width="18" height="17">${I.orbit}</svg>
      <span class="caret"></span><span class="back"></span>
    </div>`;
  }

  ribbon() {
    return html`<div class="ribbon">${groups.map(
      (g) => html`<div class="grp" style="padding-left:${g.pl ?? 4}px;padding-right:${g.pr ?? 3}px">
        <div class="items">${g.items.map(
          ([t, w, ic, c]) => html`<div class="item" style="width:${w}px">
            ${ic ? html`<svg width="32" height="30" viewBox="0 0 32 32">${I[ic]}</svg>` : ""}
            <span class="t">${t}</span>${c ? caret : ""}
          </div>`
        )}</div>
        <div class="lab">${g.label}</div>
      </div>`
    )}</div>`;
  }

  tools() {
    const s = (m: number, c: unknown, w = 18) => html`<svg style="margin-left:${m}px" width=${w} height="18" viewBox="0 0 ${w} 18">${c}</svg>`;
    return html`<div class="tools">
      ${s(0, svg`<rect x="1" y="4" width="13" height="13" fill="none" stroke="#888" stroke-dasharray="2 1"/><path d="M8 7v8M4 11h8M14 1v6M11 4h6" stroke="#d03040"/>`)}
      <span class="caret" style="margin-left:4px"></span>
      ${s(8, svg`<polygon points="9,1 16,5 16,13 9,17 2,13 2,5" fill="none" stroke="#a0b4bd" stroke-dasharray="3 1.500"/>`)}
      <span class="vs" style="margin-left:6px"></span>
      ${s(6, svg`<rect x="1" y="6" width="3" height="11" fill="#c4202e"/><rect x="5" y="6" width="3" height="11" fill="#2a9a4c"/><rect x="9" y="6" width="3" height="11" fill="#2667a8"/><polygon points="11,1 19,1 15,7" fill="#1f9fc4"/>`)}
      <div class="combo" style="width:97px;margin-left:2px">全部${caret}</div>
      <div class="yellowbtn"><svg width="18" height="18">
        <polygon points="1,6 9,2 17,7 9,17 2,12" fill="#1189ae"/><polygon points="5,6 12,5 10,12" fill="#f9c93f"/><path d="M10 8l5-5" stroke="#444"/></svg></div>
      <div class="combo" style="width:131px">整个装配${caret}</div>
      ${s(4, svg`<circle cx="7" cy="7" r="5" fill="#dfe2e4" stroke="#bcc2c5"/><path d="M4 7h6" stroke="#aaa"/>`, 14)}
      ${s(9, svg`<polygon points="9,1 16,9 9,17 2,9" fill="#aeb5b9"/><circle cx="9" cy="9" r="3" fill="#e8eaeb"/>`)}
      <span class="vs" style="margin-left:7px"></span>
      ${s(6, svg`<path d="M2 5h5M2 9h5M2 13h5" stroke="#9a9f85" stroke-width="2"/><path d="M8 6l5 3-5 3" fill="#dde"/>`, 14)}
      ${s(11, svg`<path d="M2 5h5M2 9h5M2 13h5" stroke="#3d8ba8" stroke-width="2"/><path d="M8 6l6 3-6 3" fill="#b9dbe6"/>`, 14)}
      ${s(12, svg`<path d="M2 5h5M2 9h5M2 13h5" stroke="#9aa3a8" stroke-width="2"/><path d="M8 6l5 3-5 3" fill="#dde"/>`, 14)}
      ${s(11, svg`<path d="M5 3l8 7h-4l2 5-2 1-2-5-3 3z" fill="#8d979c"/>`, 14)}
      <span class="vs" style="margin-left:6px"></span>
      ${s(5, svg`<circle cx="9" cy="9" r="7.500" fill="none" stroke="#a6adb1" stroke-width="1.500"/><path d="M8 3l3 9-3-2-2 2z" fill="#9aa3a8"/>`)}
      <div class="combo dis" style="width:93px;margin-left:5px">法向${caret}</div>
      ${s(6, svg`<path d="M5 2l9 9h-5l2 5-2 1-2-5-3 3z" fill="#b4bbbf"/>`)}
      ${s(5, svg`<circle cx="11" cy="7" r="5" fill="#c2c8cb"/><circle cx="11" cy="7" r="2" fill="#eee"/><path d="M3 15l4-5" stroke="#b4bbbf" stroke-width="3"/>`)}
    </div>`;
  }

  left() {
    return html`<div class="left">
      <div class="frow">
        <div class="fsel"><span>常用</span>${caret}</div>
        <div class="fin"></div>
        <div class="fbtn"><svg width="17" height="18"><path d="M0 1h17l-6 7v9H6V8z" fill="#1aa0bd"/><path d="M0 1h17l-3 3H3z" fill="#48c4dc"/></svg></div>
      </div>
      <div class="tree">
        <div class="row"><span style="margin-left:-21px">透盖1</span></div>
        <div class="row"><span style="margin-left:-6px">实体(1)</span></div>
        <div class="row"><span style="margin-left:-6px">历史</span></div>
        ${treeRows.map(([ic, t, c]) => html`<div class="row ${c ?? ""}"><span class="chk"></span>
          <svg width="17" height="17" viewBox="0 0 17 17">${ic}</svg><span class="t">${t}</span></div>`)}
        <div class="row stop"><i></i>----- 建模停止 -----</div>
      </div>
      <div class="lbot"><span>项</span></div>
    </div>`;
  }

  viewport() {
    return html`<div class="vp">
      <svg class="canvas" width="1223" height="817" viewBox="286 193 1223 817">${part}</svg>
      <div class="hint">您可以在自定义设置里设置热键<br />单击"帮助/显示提示"按钮来取消这些提示.</div>
      <div class="vbar">
        ${viewIcons.map(([c, w, k]) => html`<div class="vic" style="width:${w}px"><svg width="20" height="20">${c}</svg>${k ? caret : ""}</div>`)}
        <svg width="16" height="6"><rect width="16" height="6" fill="#000"/></svg>
        <svg width="16" height="16" style="margin-left:9px"><rect x=".5" y=".5" width="15" height="15" fill="#b5e0f3" stroke="#222"/></svg>
        <div class="vic" style="width:37px;margin-left:6px"><svg width="20" height="18"><polygon points="1,8 10,3 19,8 10,13" fill="#6fc6b8"/><polygon points="1,8 10,13 10,17 1,12" fill="#5a8ea4"/><polygon points="10,13 19,8 19,12 10,17" fill="#87a9b6"/></svg>${caret}</div>
        <div class="layer"><svg width="14" height="18"><path d="M7 1a5 5 0 0 1 3 9v3H4v-3a5 5 0 0 1 3-9z" fill="#fff8c8" stroke="#c1a53a"/><path d="M5 15h4" stroke="#8a8a8a" stroke-width="2"/></svg>
          <svg width="15" height="15"><circle cx="7.500" cy="7.500" r="6.500" fill="#f6e048" stroke="#74a13f" stroke-width="1.400"/></svg>
          <span class="n">图层0000</span>${caret}</div>
      </div>
      <div class="scale">111.794 mm</div>
    </div>`;
  }

  right() {
    const arrow = (d: string, c = "#a9afb2") => html`<svg width="18" height="18"><path d=${d} fill=${c}/></svg>`;
    return html`<div class="right">
      <div class="rtools">
        <div class="rbtn">${arrow("M2 9l7-6v3h7v6H9v3z")}</div>
        <div class="rbtn">${arrow("M16 9l-7-6v3H2v6h7v3z")}</div>
        <div class="rbtn">${arrow("M9 1l7 8h-4v8H6V9H2z")}</div>
        <div class="rbtn on"><svg width="20" height="20"><path d="M3 9a7 7 0 0 1 12-4l2-2v7h-7l3-3a4.500 4.500 0 0 0-7 2z" fill="#2193bd"/><path d="M17 11a7 7 0 0 1-12 4l-2 2v-7h7l-3 3a4.500 4.500 0 0 0 7-2z" fill="#1a76a0"/></svg></div>
      </div>
      <div class="ftree">
        <div class="frow2"><span class="chev"></span><svg width="16" height="16"><polygon points="8,0 10.500,5.500 16,6 12,10 13,16 8,13 3,16 4,10 0,6 5.500,5.500" fill="#1fa9dc"/></svg>收藏</div>
        ${["(C:)", "本地磁盘(D:)", "本地磁盘(G:)"].map((t) => html`<div class="frow2"><span class="chev"></span><svg width="16" height="16">${fileIcon}</svg>${t}</div>`)}
      </div>
      <div class="head"><span class="dn"></span>搜索</div>
      <div class="srow">
        <div class="combo" style="width:187px;color:#888">搜索...${caret}</div>
        <div class="combo" style="width:40px"><svg width="14" height="14"><circle cx="9" cy="7" r="5.500" fill="none" stroke="#aaa"/></svg></div>
      </div>
      <div class="head b"><span class="dn"></span>文件列表</div>
      <div class="srow" style="height:34px">
        <div class="combo" style="width:42px;background:#eceeef;padding:0 3px 0 8px">
          <svg width="18" height="18"><rect x="1" y="2" width="4" height="4" fill="#d9a03c"/><rect x="1" y="8" width="4" height="4" fill="#2a7f9e"/><rect x="1" y="13" width="4" height="4" fill="#777"/><path d="M6 4h11M6 10h11M6 15h11" stroke="#999"/><rect x="9" y="2" width="3" height="4" fill="#2a7f9e"/><rect x="9" y="8" width="3" height="4" fill="#c05050"/></svg>
          <span class="caret" style="border-top-color:#111;border-left-width:4px;border-right-width:4px"></span></div>
        <div class="combo" style="width:200px;padding-left:3px;color:#222">所有支持文件</div>
      </div>
      <div class="list"></div>
    </div>`;
  }

  taskbar() {
    return html`<div class="taskbar">
      <div class="search"><span>在这里输入你要搜索的内容</span>
        <svg width="78" height="39" viewBox="0 0 78 39">
          <rect width="78" height="39" fill="#fff"/>
          <path d="M0 14l20 16M60 0l-12 20M78 4L54 26" stroke="#9b8573" stroke-width="2.500"/>
          <path d="M2 31Q30 22 78 34v5H22z" fill="#a07a57"/>
          <ellipse cx="35" cy="17" rx="14" ry="13" fill="#c99a5b"/>
          <ellipse cx="35" cy="16" rx="9" ry="7" fill="#ecd2a2"/><circle cx="31" cy="16" r="2.500" fill="#3a2a4a"/><circle cx="39" cy="16" r="2.500" fill="#3a2a4a"/>
          <path d="M24 25l-3 10M46 25l4 12" stroke="#c99a5b" stroke-width="5"/>
          <polygon points="50,3 53,8 50,13 47,8" fill="#dc7fe0"/><path d="M0 30l7-6 3 7-6 4zM62 5l6-3-1 9-5 2z" fill="#8fa52f"/><circle cx="2" cy="30" r="2" fill="#f2c53d"/><circle cx="74" cy="14" r="2" fill="#6fc4e6"/>
        </svg>
      </div>
      ${taskIcons.map(([k, c], i) =>
        i === 11
          ? html`<div class="tk u"><div class="bili">bilibili</div></div>`
          : html`<div class="tk ${k}"><svg width="28" height="28" viewBox="0 0 28 28">${c}</svg></div>`
      )}
      <div class="tray">
        <svg width="26" height="22"><path d="M5 20a5 5 0 0 1 0-10 8 8 0 0 1 15-1 5.500 5.500 0 0 1 2 11z" fill="#a9c8e6"/><path d="M14 6a5 5 0 0 1 10 4l-4-1z" fill="#e8614a"/></svg>
        <span class="tmp">20°C</span><span class="wd">多云</span>
        <svg width="12" height="8" style="margin-left:24px"><path d="M1 7l5-5 5 5" fill="none" stroke="#222" stroke-width="1.300"/></svg>
        <svg width="16" height="15" style="margin-left:11px"><path d="M1 1h14v9H1zM8 10v4M3 14h10" fill="none" stroke="#222" stroke-width="1.200"/></svg>
        <svg width="16" height="14" style="margin-left:8px"><path d="M1 5h3l3-3v10L4 9H1z" fill="none" stroke="#333"/><path d="M10 4q2 3 0 6M12 2q3 5 0 10" fill="none" stroke="#999"/></svg>
        <span class="ime">中</span>
        <svg width="16" height="16" style="margin-left:14px"><rect x="1" y="1" width="14" height="14" rx="3" fill="#e8561f"/><path d="M12 5H5v3h6v3H4" fill="none" stroke="#fff" stroke-width="2"/></svg>
        <span class="clk">2</span>
      </div>
    </div>`;
  }

  render() {
    return html`
      <div class="menubar">${this.qa()}
        <div class="menus">${menus.map((m) => html`<span>${m}</span>`)}</div>
        <span class="title">中望3D 2021 x64 - [透盖1.Z3]</span>
      </div>
      <div class="tabs">
        ${tabs.map((t, i) => html`<div class="tab ${i === 0 ? "on" : ""}">${t}</div>`)}
        <div class="cmd"><svg width="10" height="8"><path d="M1 6l4-5 4 5-4 2z" fill="none" stroke="#444"/></svg>
          <div class="cmdbox">查找命令<svg width="15" height="15"><circle cx="7" cy="7" r="5.500" fill="none" stroke="#a3a9ac"/><path d="M11 11l3 3" stroke="#a3a9ac"/></svg></div></div>
      </div>
      ${this.ribbon()}
      ${this.tools()}
      <div class="docbar">
        <div class="docl">
          <svg width="11" height="11"><rect x=".5" y=".5" width="9" height="9" fill="none" stroke="#7a8387"/><rect x="3" y="4" width="4" height="2" fill="#7a8387"/></svg>
          <svg width="12" height="12"><path d="M1 1l10 10M11 1L1 11" stroke="#8a9296" stroke-width="2.600"/><path d="M1 1l10 10M11 1L1 11" stroke="#eef0f1" stroke-width="1"/></svg>
        </div>
        <div class="doctab"><svg width="10" height="10"><path d="M5 0v10M0 5h10" stroke="#9b7a3c" stroke-width="2.400"/></svg>
          <span>透盖1.Z3</span>
          <svg class="x" width="10" height="10"><path d="M1 1l8 8M9 1L1 9" stroke="#8a6d34" stroke-width="2"/></svg></div>
        <span class="plus">+</span>
        <div class="fbt"><svg width="10" height="10"><path d="M1 2h9M1 5l4.500 5L10 5z" stroke="#8f979b" fill="#8f979b"/></svg>文件浏览器</div>
      </div>
      <div class="main">${this.left()}${this.viewport()}${this.right()}</div>
      <div class="status">
        <span class="st">实体</span>
        <div class="stbtn"><svg width="14" height="14"><rect x="1" y="1" width="12" height="12" fill="#fff" stroke="#666"/><path d="M4 4h6M7 4v7" stroke="#a07a3a"/></svg></div>
        <div class="stbtn"><svg width="15" height="13"><rect width="15" height="9" fill="#2a87a8"/><rect x="5" y="10" width="5" height="2" fill="#555"/></svg></div>
        <div class="stbtn"><svg width="15" height="15"><rect x="1" y="1" width="13" height="13" fill="#fff" stroke="#566"/><path d="M3 4h9M3 7h9M3 10h9" stroke="#789"/></svg></div>
        <div class="stin"></div>
      </div>
      ${this.taskbar()}
      <div class="output"><b>输出</b>
        <div class="obody"><div>激活零件 [透盖1]进行编辑<br />旋转<br />旋转<br />[透盖1.Z3]成功恢复文件.</div></div>
      </div>`;
  }
}
